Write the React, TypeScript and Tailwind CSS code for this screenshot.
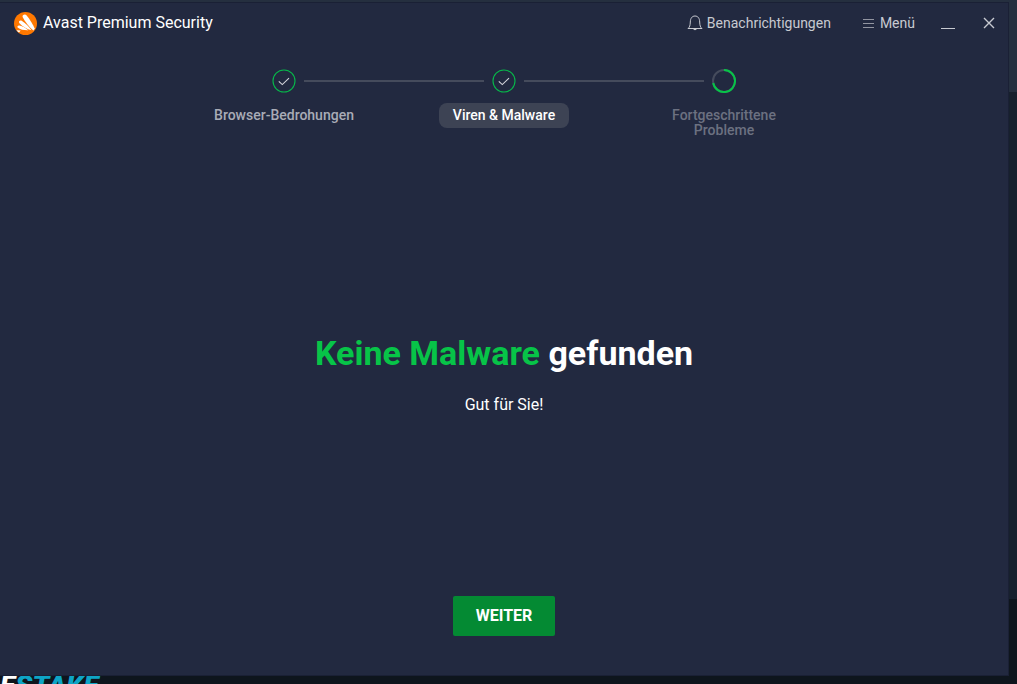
type StepState = 'done' | 'running'

interface Step {
  label: string
  state: StepState
  labelClass: string
}

const STEPS: Step[] = [
  { label: 'Browser-Bedrohungen', state: 'done', labelClass: 'text-[#a9acb7]' },
  { label: 'Viren & Malware', state: 'done', labelClass: 'bg-[#3d4354] text-white' },
  { label: 'Fortgeschrittene Probleme', state: 'running', labelClass: 'text-[#6c7181]' },
]

function AvastLogo() {
  return (
    <svg width="23" height="23" viewBox="0 0 24 24" aria-hidden="true">
      <circle cx="12" cy="12" r="12" fill="#ff7800" />
      <g fill="#fff">
        <path d="M9 5.200C8.200 3.200 11.400 1.400 13 3.300C16.800 8 19.600 12.600 21.600 17.200C21.200 18.200 20.800 18.800 20.200 19.400C15.400 15 11.400 10.300 9 5.200Z" />
        <path d="M5.500 11.400C4.400 9.900 6.200 8.200 8 9.200C12 11.700 15.600 15.200 18.200 19C13.400 17.800 8.600 15.300 5.500 11.400Z" />
        <path d="M3.800 16.300C2.900 15 4.200 13.700 5.800 14.100C9.200 15 12.200 16.700 14.900 19.100C10.800 19.200 6.600 18.700 3.800 16.300Z" />
        <path d="M2.600 19L7 19.400L5.200 21.400C4.200 20.800 3.300 20 2.600 19Z" />
      </g>
    </svg>
  )
}

function StepIcon({ state }: { state: StepState }) {
  return (
    <svg width="24" height="24" viewBox="0 0 24 24" fill="none" aria-hidden="true">
      {state === 'done' ? (
        <>
          <circle cx="12" cy="12" r="11" stroke="#07b84a" strokeWidth="1.100" />
          <path d="M6.800 12.400L10.300 15.600L17 9.200" stroke="#d3d4da" strokeWidth="1.100" />
        </>
      ) : (
        <>
          <circle cx="12" cy="12" r="11" stroke="#454b5c" strokeWidth="2" />
          <path d="M12 1A11 11 0 1 1 1.200 14" stroke="#07c448" strokeWidth="2" />
        </>
      )}
    </svg>
  )
}

function TitleBar() {
  return (
    <header className="flex h-10 items-center justify-between pr-[11px] pl-3.5 text-sm text-[#c8cad1]">
      <div className="flex items-center gap-1.5 text-base text-white">
        <AvastLogo />
        Avast Premium Security
      </div>
      <div className="flex items-center">
        <button type="button" className="flex items-center gap-1">
          <svg width="16" height="16" viewBox="0 0 16 16" fill="none" stroke="currentColor" aria-hidden="true">
            <path d="M1 13.500C2.700 12.200 3.200 10.500 3.300 7C3.400 3.400 5 1 8 1S12.600 3.400 12.700 7C12.800 10.500 13.300 12.200 15 13.500Z" />
            <path d="M6.300 14H9.700C9.500 15.500 6.500 15.500 6.300 14Z" fill="currentColor" stroke="none" />
          </svg>
          Benachrichtigungen
        </button>
        <button type="button" className="ml-8 flex items-center gap-1.5">
          <svg width="11" height="11" viewBox="0 0 11 11" stroke="#9295a1" aria-hidden="true">
            <path d="M0 1.500H11M0 5.500H11M0 9.500H11" />
          </svg>
          Menü
        </button>
        <button type="button" aria-label="Minimieren" className="ml-6 p-0.5">
          <svg width="14" height="14" viewBox="0 0 14 14" stroke="currentColor" aria-hidden="true">
            <path d="M0 12.500H14" />
          </svg>
        </button>
        <button type="button" aria-label="Schließen" className="ml-6 p-0.5">
          <svg width="12" height="12" viewBox="0 0 12 12" stroke="currentColor" strokeWidth="1.400" aria-hidden="true">
            <path d="M1 1L11 11M11 1L1 11" />
          </svg>
        </button>
      </div>
    </header>
  )
}

function Stepper() {
  return (
    <ol className="mx-auto mt-[26px] grid w-full max-w-[660px] grid-cols-3">
      {STEPS.map((step, i) => (
        <li key={step.label} className="flex flex-col items-center">
          <div className="flex w-full items-center gap-2">
            <span className={`h-0.5 flex-1 ${i > 0 ? 'bg-[#454b5c]' : ''}`} />
            <StepIcon state={step.state} />
            <span className={`h-0.5 flex-1 ${i < STEPS.length - 1 ? 'bg-[#454b5c]' : ''}`} />
          </div>
          <span
            className={`mt-2.5 max-w-44 rounded-lg px-3.5 py-[5px] text-center text-sm leading-[15px] font-medium ${step.labelClass}`}
          >
            {step.label}
          </span>
        </li>
      ))}
    </ol>
  )
}

export default function App() {
  return (
    <div className="relative flex h-screen flex-col overflow-hidden bg-[#0e151d] pb-2 font-['Roboto',sans-serif]">
      {/* page behind the window */}
      <div className="absolute inset-x-0 top-0 h-[599px] bg-[#17202d]" />
      <div className="absolute inset-x-0 top-0 h-[92px] bg-[#252f3f]" />
      <p className="absolute -bottom-4 left-0 text-[28px] leading-7 font-black text-white italic">
        E<span className="text-[#0ea5c6]">STAKE</span>
      </p>

      <main className="relative mt-0.5 mr-2 flex flex-1 flex-col border-t border-r border-b border-[#1a2035] bg-[#222940]">
        <TitleBar />
        <Stepper />
        <section className="flex flex-1 flex-col items-center pt-[186px] text-center text-white">
          <h1 className="text-[34px] leading-12 font-bold">
            <span className="text-[#07c448]">Keine Malware</span> gefunden
          </h1>
          <p className="mt-4 text-base">Gut für Sie!</p>
        </section>
        <button
          type="button"
          className="mx-auto mb-[39px] h-10 rounded-xs bg-[#048a33] px-[23px] text-base font-bold text-white"
        >
          WEITER
        </button>
      </main>
    </div>
  )
}
